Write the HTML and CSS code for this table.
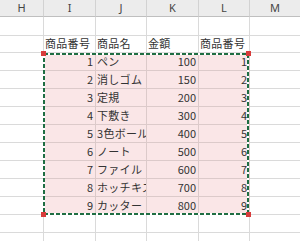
FILE: index.html
```html
<!DOCTYPE html>
<html lang="ja">
<head>
<meta charset="utf-8">
<link rel="stylesheet" href="styles.css">
</head>
<body>
<div class="sheet">
  <div class="grid">
    <div class="hd">H</div><div class="hd">I</div><div class="hd">J</div><div class="hd">K</div><div class="hd">L</div><div class="hd">M</div>

    <div class="c"></div><div class="c"></div><div class="c"></div><div class="c"></div><div class="c"></div><div class="c"></div>

    <div class="c"></div><div class="c t">商品番号</div><div class="c t">商品名</div><div class="c t">金額</div><div class="c t">商品番号</div><div class="c"></div>

    <div class="c"></div><div class="c p n">1</div><div class="c p t">ペン</div><div class="c p n">100</div><div class="c p n">1</div><div class="c"></div>
    <div class="c"></div><div class="c p n">2</div><div class="c p t">消しゴム</div><div class="c p n">150</div><div class="c p n">2</div><div class="c"></div>
    <div class="c"></div><div class="c p n">3</div><div class="c p t">定規</div><div class="c p n">200</div><div class="c p n">3</div><div class="c"></div>
    <div class="c"></div><div class="c p n">4</div><div class="c p t">下敷き</div><div class="c p n">300</div><div class="c p n">4</div><div class="c"></div>
    <div class="c"></div><div class="c p n">5</div><div class="c p t">3色ボールペン</div><div class="c p n">400</div><div class="c p n">5</div><div class="c"></div>
    <div class="c"></div><div class="c p n">6</div><div class="c p t">ノート</div><div class="c p n">500</div><div class="c p n">6</div><div class="c"></div>
    <div class="c"></div><div class="c p n">7</div><div class="c p t">ファイル</div><div class="c p n">600</div><div class="c p n">7</div><div class="c"></div>
    <div class="c"></div><div class="c p n">8</div><div class="c p t">ホッチキス</div><div class="c p n">700</div><div class="c p n">8</div><div class="c"></div>
    <div class="c"></div><div class="c p n">9</div><div class="c p t">カッター</div><div class="c p n">800</div><div class="c p n">9</div><div class="c"></div>

    <div class="c"></div><div class="c"></div><div class="c"></div><div class="c"></div><div class="c"></div><div class="c"></div>
    <div class="c"></div><div class="c"></div><div class="c"></div><div class="c"></div><div class="c"></div><div class="c"></div>
  </div>
  <svg class="marquee" width="300" height="241" viewBox="0 0 300 241">
    <rect x="44" y="54" width="204" height="160" fill="none" stroke="#ffffff" stroke-width="2"/>
    <rect x="44" y="54" width="204" height="160" fill="none" stroke="#1f6e43" stroke-width="2" stroke-dasharray="4 2"/>
    <rect x="41" y="51" width="5" height="5" fill="#d83b3b"/>
    <rect x="246" y="51" width="5" height="5" fill="#d83b3b"/>
    <rect x="41" y="212" width="5" height="5" fill="#d83b3b"/>
    <rect x="246" y="212" width="5" height="5" fill="#d83b3b"/>
  </svg>
</div>
</body>
</html>
```

FILE: styles.css
```css
html, body {
  margin: 0;
  padding: 0;
  background: #ffffff;
  overflow: hidden;
}

.sheet {
  position: relative;
  width: 300px;
  height: 241px;
  overflow: hidden;
  font-family: "Noto Sans CJK JP", "Noto Sans", sans-serif;
  font-size: 11px;
  color: #333333;
}

.grid {
  display: grid;
  grid-template-columns: 44px 52px 51px 52px 51px 51px;
  grid-template-rows: 17px 19px 17px repeat(9, 18px) 18px 18px;
}

.hd {
  box-sizing: border-box;
  background: #ececec;
  border-right: 1px solid #d2d2d2;
  border-bottom: 1px solid #bfbfbf;
  color: #444444;
  font-family: "Noto Sans", sans-serif;
  font-size: 11px;
  line-height: 16px;
  text-align: center;
}

.c {
  box-sizing: border-box;
  border-right: 1px solid #dadada;
  border-bottom: 1px solid #dadada;
  display: flex;
  align-items: flex-end;
  overflow: hidden;
  white-space: nowrap;
  line-height: 15px;
  padding: 0 2px 1px 1px;
}

.p {
  background: #fae6e7;
  border-color: #dccaca;
}

.t {
  justify-content: flex-start;
  letter-spacing: 0.3px;
}

.n {
  justify-content: flex-end;
}

.marquee {
  position: absolute;
  left: 0;
  top: 0;
  pointer-events: none;
}
```
